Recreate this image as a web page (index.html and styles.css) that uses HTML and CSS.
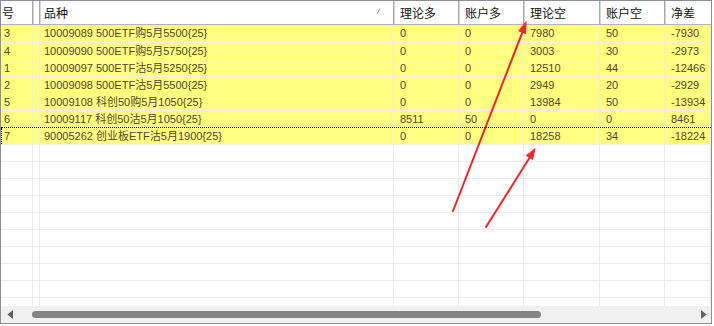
FILE: index.html
```html
<!DOCTYPE html>
<html>
<head>
<meta charset="utf-8">
<link rel="stylesheet" href="styles.css">
</head>
<body>
<div class="list">
  <div class="grid header">
    <div class="hc c0">号</div>
    <div class="hc c1"></div>
    <div class="hc c2"><span>品种</span><svg class="sort" width="5" height="7" viewBox="0 0 5 7"><line x1="4" y1="0.5" x2="1" y2="6" stroke="#9a9a9a" stroke-width="1"/></svg></div>
    <div class="hc">理论多</div>
    <div class="hc">账户多</div>
    <div class="hc">理论空</div>
    <div class="hc">账户空</div>
    <div class="hc last">净差</div>
  </div>
  <div class="body">
    <div class="grid row hl first"><div class="c c0">3</div><div class="c"></div><div class="c">10009089 500ETF购5月5500{25}</div><div class="c">0</div><div class="c">0</div><div class="c">7980</div><div class="c">50</div><div class="c">-7930</div></div>
    <div class="grid row hl"><div class="c c0">4</div><div class="c"></div><div class="c">10009090 500ETF购5月5750{25}</div><div class="c">0</div><div class="c">0</div><div class="c">3003</div><div class="c">30</div><div class="c">-2973</div></div>
    <div class="grid row hl"><div class="c c0">1</div><div class="c"></div><div class="c">10009097 500ETF沽5月5250{25}</div><div class="c">0</div><div class="c">0</div><div class="c">12510</div><div class="c">44</div><div class="c">-12466</div></div>
    <div class="grid row hl"><div class="c c0">2</div><div class="c"></div><div class="c">10009098 500ETF沽5月5500{25}</div><div class="c">0</div><div class="c">0</div><div class="c">2949</div><div class="c">20</div><div class="c">-2929</div></div>
    <div class="grid row hl"><div class="c c0">5</div><div class="c"></div><div class="c">10009108 科创50购5月1050{25}</div><div class="c">0</div><div class="c">0</div><div class="c">13984</div><div class="c">50</div><div class="c">-13934</div></div>
    <div class="grid row hl pre-focus"><div class="c c0">6</div><div class="c"></div><div class="c">10009117 科创50沽5月1050{25}</div><div class="c">8511</div><div class="c">50</div><div class="c">0</div><div class="c">0</div><div class="c">8461</div></div>
    <div class="grid row hl focus"><div class="c c0">7</div><div class="c"></div><div class="c">90005262 创业板ETF沽5月1900{25}</div><div class="c">0</div><div class="c">0</div><div class="c">18258</div><div class="c">34</div><div class="c">-18224</div></div>
    <div class="grid row"><div class="c"></div><div class="c"></div><div class="c"></div><div class="c"></div><div class="c"></div><div class="c"></div><div class="c"></div><div class="c"></div></div>
    <div class="grid row"><div class="c"></div><div class="c"></div><div class="c"></div><div class="c"></div><div class="c"></div><div class="c"></div><div class="c"></div><div class="c"></div></div>
    <div class="grid row"><div class="c"></div><div class="c"></div><div class="c"></div><div class="c"></div><div class="c"></div><div class="c"></div><div class="c"></div><div class="c"></div></div>
    <div class="grid row"><div class="c"></div><div class="c"></div><div class="c"></div><div class="c"></div><div class="c"></div><div class="c"></div><div class="c"></div><div class="c"></div></div>
    <div class="grid row"><div class="c"></div><div class="c"></div><div class="c"></div><div class="c"></div><div class="c"></div><div class="c"></div><div class="c"></div><div class="c"></div></div>
    <div class="grid row"><div class="c"></div><div class="c"></div><div class="c"></div><div class="c"></div><div class="c"></div><div class="c"></div><div class="c"></div><div class="c"></div></div>
    <div class="grid row"><div class="c"></div><div class="c"></div><div class="c"></div><div class="c"></div><div class="c"></div><div class="c"></div><div class="c"></div><div class="c"></div></div>
    <div class="grid row"><div class="c"></div><div class="c"></div><div class="c"></div><div class="c"></div><div class="c"></div><div class="c"></div><div class="c"></div><div class="c"></div></div>
    <div class="grid row"><div class="c"></div><div class="c"></div><div class="c"></div><div class="c"></div><div class="c"></div><div class="c"></div><div class="c"></div><div class="c"></div></div>
    <div class="grid row"><div class="c"></div><div class="c"></div><div class="c"></div><div class="c"></div><div class="c"></div><div class="c"></div><div class="c"></div><div class="c"></div></div>
  </div>
  <div class="hscroll">
    <div class="sbtn"><svg width="7" height="9" viewBox="0 0 7 9"><polygon points="6,0 6,9 0.5,4.5" fill="#606060"/></svg></div>
    <div class="track"><div class="thumb"></div></div>
    <div class="sbtn right"><svg width="7" height="9" viewBox="0 0 7 9"><polygon points="1,0 1,9 6.5,4.5" fill="#606060"/></svg></div>
  </div>
</div>
<svg class="arrows" width="714" height="326" viewBox="0 0 714 326">
  <g stroke="#f52525" stroke-width="2" fill="#f52525" stroke-linecap="round">
    <line x1="453" y1="211" x2="522.4" y2="32.3"/>
    <polygon points="526,22 525.6,33.6 519.1,31" stroke-width="1" stroke-linejoin="round"/>
    <line x1="486" y1="227" x2="529.7" y2="157.5"/>
    <polygon points="535,149 532.6,159.4 526.7,155.6" stroke-width="1" stroke-linejoin="round"/>
  </g>
</svg>
</body>
</html>
```

FILE: styles.css
```css
html, body {
  margin: 0;
  padding: 0;
  background: #ffffff;
}
body {
  position: relative;
  width: 714px;
  height: 326px;
  overflow: hidden;
  font-family: "Liberation Sans", "Noto Sans CJK SC", sans-serif;
}
.list {
  width: 712px;
  height: 324px;
  box-sizing: border-box;
  border: 1px solid #8c8f96;
  display: flex;
  flex-direction: column;
  background: #fff;
  overflow: hidden;
}
.grid {
  display: grid;
  grid-template-columns: 32px 5px 356px 65px 65px 76px 65px 1fr;
}
.header {
  height: 24px;
  box-sizing: border-box;
  border-bottom: 1px solid #b4b4b4;
  font-family: "Noto Sans CJK SC", sans-serif;
  font-size: 12px;
  color: #111;
  flex: none;
}
.hc {
  box-sizing: border-box;
  border-right: 1px solid #a9a9a9;
  box-shadow: 1px 0 0 #d6d6d6;
  padding-left: 6px;
  line-height: 23px;
  white-space: nowrap;
  overflow: hidden;
  display: flex;
  align-items: center;
}
.hc.c0 { padding-left: 1px; }
.hc.last { border-right: none; box-shadow: none; }
.hc.c2 { justify-content: space-between; padding-right: 12px; }
.sort { display: block; margin-top: -2px; }
.body {
  flex: 1;
  overflow: hidden;
}
.row {
  height: 17px;
  box-sizing: border-box;
  border-bottom: 1px solid #ececec;
  font-size: 11px;
  color: #55472c;
}
.row.first { height: 18px; }
.row.hl { background: #ffff80; }
.row.hl { border-bottom-color: #f2f2de; }
.row.pre-focus { border-bottom: 1px dotted #000; }
.row.focus .c0 { border-left: 1px dotted #000; padding-left: 2px; }
.c {
  box-sizing: border-box;
  border-right: 1px solid #ececec;
  padding-left: 6px;
  line-height: 16px;
  white-space: nowrap;
  overflow: hidden;
}
.row.first .c { line-height: 17px; }
.c.c0 { padding-left: 3px; }
.hl .c { border-right-color: #efefe0; }
.hscroll {
  flex: none;
  height: 17px;
  background: #f0f0f0;
  display: flex;
  align-items: center;
}
.sbtn {
  width: 17px;
  height: 17px;
  display: flex;
  align-items: center;
  justify-content: center;
  flex: none;
  padding-left: 1px;
  box-sizing: border-box;
}
.sbtn.right { padding-left: 2px; }
.track {
  flex: 1;
  height: 17px;
  display: flex;
  align-items: center;
  padding-left: 14px;
}
.thumb {
  width: 509px;
  height: 7px;
  border-radius: 4px;
  background: #858585;
}
.arrows {
  position: absolute;
  left: 0;
  top: 0;
  pointer-events: none;
}
```
